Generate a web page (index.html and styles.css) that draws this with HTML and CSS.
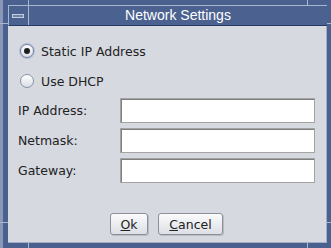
FILE: index.html
```html
<!DOCTYPE html>
<html lang="en">
<head>
  <meta charset="UTF-8" />
  <title>Network Settings</title>
  <link rel="stylesheet" href="styles.css">
</head>
<body>
  <div class="window">
    <div class="titlebar">
      <div class="menu-btn"><span class="menu-bar"></span></div>
      <div class="title">Network Settings</div>
    </div>

    <div class="content">
      <label class="radio-row"><span class="radio checked"></span>Static IP Address</label>
      <label class="radio-row"><span class="radio"></span>Use DHCP</label>

      <div class="fields">
        <span class="field-label">IP Address:</span><div class="field"></div>
        <span class="field-label">Netmask:</span><div class="field"></div>
        <span class="field-label">Gateway:</span><div class="field"></div>
      </div>

      <div class="actions">
        <button class="btn ok"><u>O</u>k</button>
        <button class="btn cancel"><u>C</u>ancel</button>
      </div>
    </div>

    <!-- resize handle marks on the frame -->
    <span class="notch v top-left"></span>
    <span class="notch v top-right"></span>
    <span class="notch v bottom-left"></span>
    <span class="notch v bottom-right"></span>
    <span class="notch h left-top"></span>
    <span class="notch h right-top"></span>
    <span class="notch h left-bottom"></span>
    <span class="notch h right-bottom"></span>
  </div>
</body>
</html>
```

FILE: styles.css
```css
body {
  margin: 0;
  padding: 0;
  background-color: #4a6190;
  font-family: "DejaVu Sans", sans-serif;
}

.window {
  position: relative;
  width: 331px;
  height: 248px;
  box-sizing: border-box;
  padding: 5px 4px 5px 5px;
  border-left: 3px solid #8898b6;
  background-color: #4a6190;
  display: flex;
  flex-direction: column;
}

.titlebar {
  height: 21px;
  box-sizing: border-box;
  display: flex;
  border-top: 1px solid #a9b6cf;
  border-left: 1px solid #a9b6cf;
  border-bottom: 1px solid #263a63;
  background-color: #4b6291;
}

.menu-btn {
  width: 19px;
  border-right: 1px solid #a9b6cf;
  display: flex;
  align-items: center;
  justify-content: center;
}

.menu-bar {
  width: 10px;
  height: 2px;
  border: 1px solid #c3cddd;
  background-color: #6f82a8;
  margin-left: -2px;
}

.title {
  flex: 1;
  text-align: center;
  color: white;
  font-family: "Liberation Sans", sans-serif;
  font-size: 14px;
  line-height: 19px;
}

.content {
  flex: 1;
  background-color: #d6d9e0;
  border-bottom: 1px solid #a2aec6;
  border-right: 1px solid #a2aec6;
  padding: 10px 11px 0 10px;
  font-size: 12.5px;
  color: #222;
}

.radio-row {
  height: 30px;
  display: flex;
  align-items: center;
}

.radio {
  width: 12px;
  height: 12px;
  margin: 0 7px 0 2px;
  border: 1px solid #8b93a6;
  border-radius: 50%;
  background: linear-gradient(#ffffff, #d9dde5);
  display: flex;
  align-items: center;
  justify-content: center;
}

.radio.checked {
  border-color: #6f7fa3;
  box-shadow: 0 0 0 1px #b3bdd3;
}

.radio.checked::after {
  content: "";
  width: 6px;
  height: 6px;
  border-radius: 50%;
  background-color: #1e1e1e;
}

.fields {
  margin-top: 2px;
  display: grid;
  grid-template-columns: 102px 1fr;
  grid-auto-rows: 25px;
  row-gap: 5px;
  align-items: center;
}

.field {
  height: 25px;
  box-sizing: border-box;
  background-color: white;
  border: 1px solid #a3a3a3;
  box-shadow: inset 1px 1px 0 #7e7e7e;
}

.actions {
  margin-top: 30px;
  display: flex;
  justify-content: center;
  gap: 10px;
}

.btn {
  height: 22px;
  padding: 0;
  font-family: "DejaVu Sans", sans-serif;
  font-size: 12.5px;
  color: #222;
  border: 1px solid #8c9099;
  border-radius: 3px;
  background: linear-gradient(#fbfbfc, #dcdfe5);
  box-shadow: 1px 1px 0 #b9bcc4;
}

.btn.ok { width: 38px; }
.btn.cancel { width: 65px; }

.notch {
  position: absolute;
  background-color: #a9b6cf;
}

.notch.v { width: 1px; height: 5px; }
.notch.h { width: 5px; height: 1px; }

.notch.top-left { left: 25px; top: 0; }
.notch.top-right { left: 304px; top: 0; }
.notch.bottom-left { left: 25px; bottom: 0; }
.notch.bottom-right { left: 304px; bottom: 0; }
.notch.left-top { left: -3px; top: 23px; width: 8px; }
.notch.right-top { right: 0; top: 23px; width: 4px; }
.notch.left-bottom { left: -3px; top: 222px; width: 8px; }
.notch.right-bottom { right: 0; top: 222px; width: 4px; }
```
